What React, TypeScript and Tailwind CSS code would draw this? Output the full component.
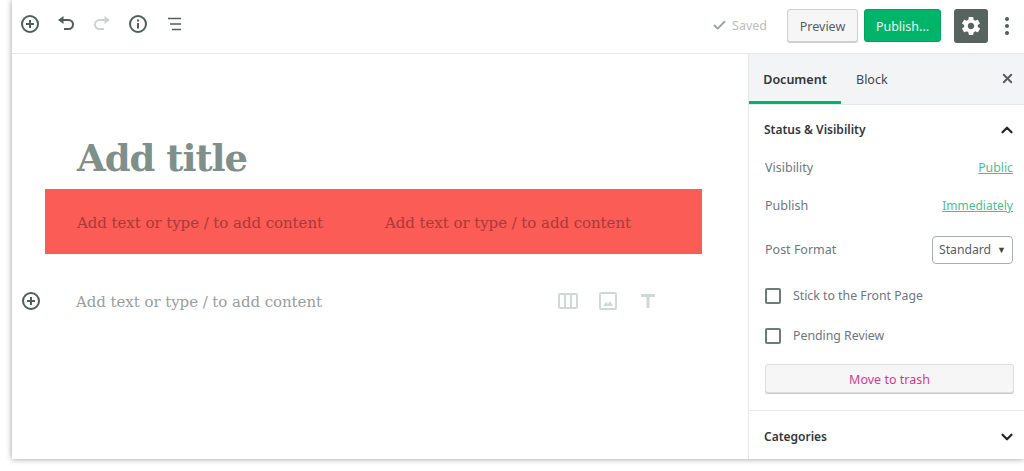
import React from "react";
import { FiCheck, FiChevronDown, FiChevronUp, FiX } from "react-icons/fi";
import { IoMdSettings } from "react-icons/io";

const serif = "font-['DejaVu_Serif',serif]";

const PlusCircle = ({ size = 20 }: { size?: number }) => (
  <svg width={size} height={size} viewBox="0 0 20 20" fill="none" stroke="#4f5f5b" strokeWidth="2">
    <circle cx="10" cy="10" r="8" />
    <path d="M10 6v8M6 10h8" />
  </svg>
);

const Undo = ({ color }: { color: string }) => (
  <svg width="20" height="20" viewBox="0 0 20 20" fill="none" stroke={color} strokeWidth="2">
    <path d="M5 6h7.500a4.500 4.500 0 0 1 0 9H8" />
    <path d="M7.500 2 2 6l5.500 4z" fill={color} stroke="none" />
  </svg>
);

const TopBar = () => {
  return (
    <div className="h-[54px] shrink-0 flex items-center justify-between border-b border-[#e6e9e9] pl-[8px] pr-[8px] pb-[2px]">
      <div className="flex items-center gap-[16px] pb-[4px]">
        <PlusCircle />
        <div className="-ml-[0.500px]">
          <Undo color="#4f5f5b" />
        </div>
        <div className="-scale-x-100">
          <Undo color="#ccd4d2" />
        </div>
        <svg className="ml-[0.500px]" width="20" height="20" viewBox="0 0 20 20" fill="none" stroke="#4f5f5b" strokeWidth="2">
          <circle cx="10" cy="10" r="8" />
          <path d="M10 9v5.500M10 5.500v2" />
        </svg>
        <svg width="20" height="20" viewBox="0 0 20 20" fill="none" stroke="#4f5f5b" strokeWidth="1.500">
          <path d="M4 4.500h3M6 4.500h11M6 10h11M8 15.500h9" />
        </svg>
      </div>
      <div className="flex items-center font-['Noto_Sans',sans-serif] text-[12.500px]">
        <FiCheck className="text-[#9aa5a3] text-[15px] mr-[5px] ml-[1px]" strokeWidth={3} />
        <span className="text-[#b8c0be] mr-[20px] pt-[2px]">Saved</span>
        <button className="w-[71px] h-[33px] pt-[4px] mr-[6px] rounded-[3px] border border-[#ccd0d0] bg-[#f6f6f6] text-[#555d66] shadow-[0_1px_0_#ccd0d0]">
          Preview
        </button>
        <button className="w-[77px] h-[33px] pt-[3px] mr-[13px] rounded-[3px] bg-[#00b56a] border border-[#00a45f] text-[#e6f7ef]">
          Publish...
        </button>
        <div className="w-[34px] h-[34px] mr-[17px] rounded-[3px] bg-[#56635f] flex items-center justify-center">
          <IoMdSettings className="text-white text-[22px]" />
        </div>
        <div className="flex flex-col gap-[3px] w-[4px] mr-[7px]">
          <span className="w-[4px] h-[4px] rounded-full bg-[#4f5f5b]"></span>
          <span className="w-[4px] h-[4px] rounded-full bg-[#4f5f5b]"></span>
          <span className="w-[4px] h-[4px] rounded-full bg-[#4f5f5b]"></span>
        </div>
      </div>
    </div>
  );
};

const Editor = () => {
  const placeholder = "Add text or type / to add content";
  return (
    <div className={`flex-1 flex flex-col ${serif}`}>
      <h1 className="h-[135px] pl-[65px] pt-[80px] text-[37px] leading-[48px] font-bold text-[#7f908b] tracking-[-1px]">
        Add title
      </h1>
      <div className="ml-[33px] mr-[46px] h-[65px] bg-[#fb5c56] flex items-center pl-[32px] pt-[3px] text-[15px] text-[#a83a37] tracking-[-0.06px]">
        <p className="w-[308px]">{placeholder}</p>
        <p>{placeholder}</p>
      </div>
      <div className="mt-[33px] h-[28px] flex items-center pl-[9px]">
        <PlusCircle />
        <p className="ml-[35px] pt-[2px] text-[15px] text-[#98a09e] tracking-[-0.06px]">{placeholder}</p>
        <div className="ml-[236px] flex items-center gap-[20px]">
          <svg width="20" height="20" viewBox="0 0 20 20" fill="none" stroke="#cfdad6" strokeWidth="2">
            <rect x="1" y="3" width="18" height="14" rx="1" />
            <path d="M7 3v14M13 3v14" />
          </svg>
          <svg width="20" height="20" viewBox="0 0 20 20" fill="none" stroke="#cfdad6" strokeWidth="2">
            <rect x="2" y="2" width="16" height="16" rx="1" />
            <path d="M5 15l3-4 2 2 2-3 3 5z" fill="#cfdad6" stroke="none" />
          </svg>
          <svg width="20" height="20" viewBox="0 0 20 20" fill="none" stroke="#cfdad6" strokeWidth="3">
            <path d="M3 4.500h14M10 4.500V17" />
          </svg>
        </div>
      </div>
    </div>
  );
};

const Field = ({ label, children, className }: { label: string; children: React.ReactNode; className: string }) => (
  <div className={`flex items-center justify-between ${className}`}>
    <span className="text-[#6c7781]">{label}</span>
    {children}
  </div>
);

const Check = ({ label, className }: { label: string; className: string }) => (
  <div className={`flex items-center ${className}`}>
    <span className="w-[16px] h-[16px] rounded-[2px] border-2 border-[#6c7d79] mr-[12px]"></span>
    <span className="text-[#6c7781] text-[12.300px]">{label}</span>
  </div>
);

const Sidebar = () => {
  return (
    <div className="w-[276px] shrink-0 border-l border-[#e6e9e9] flex flex-col font-['Noto_Sans',sans-serif] text-[12.500px]">
      <div className="h-[51px] shrink-0 bg-[#f3f4f5] border-b border-[#e6e9e9] flex items-stretch relative">
        <div className="w-[92px] border-b-[3px] border-[#00b56a] flex items-center justify-center font-semibold text-[#32373c] pt-[5px]">
          Document
        </div>
        <div className="ml-[15px] flex items-center text-[#40464d] pt-[2px]">Block</div>
        <FiX className="absolute right-[9px] top-[17px] text-[#555d66] text-[15px]" strokeWidth={3} />
      </div>
      <div className="flex-1 flex flex-col">
        <div className="h-[306px] border-b border-[#e6e9e9] pl-[16px] pr-[10px]">
          <div className="h-[50px] -ml-[1px] flex items-center justify-between font-semibold text-[#32373c] text-[12px]">
            Status &amp; Visibility
            <FiChevronUp className="text-[#23282d] text-[18px] mr-[-2px]" strokeWidth={3} />
          </div>
          <Field label="Visibility" className="h-[24px] mt-[1px]">
            <a className="text-[#4cbf91] underline text-[12.300px] mr-[1px]">Public</a>
          </Field>
          <Field label="Publish" className="h-[24px] mt-[14px]">
            <a className="text-[#4cbf91] underline text-[12px] mr-[1px]">Immediately</a>
          </Field>
          <Field label="Post Format" className="h-[28px] mt-[18px]">
            <div className="w-[81px] h-[28px] mr-[1px] border border-[#a4b0ac] rounded-[4px] flex items-center justify-between pl-[6px] pr-[6px] text-[#555d66] text-[12.200px]">
              Standard
              <span className="text-[9px] text-[#40464d]">▼</span>
            </div>
          </Field>
          <Check label="Stick to the Front Page" className="h-[20px] mt-[22px]" />
          <Check label="Pending Review" className="h-[20px] mt-[20px]" />
          <button className="w-full h-[29px] mt-[18px] pt-[3px] rounded-[3px] border border-[#dcdfdf] bg-[#f6f6f6] shadow-[0_1px_0_#c6caca] text-[#d63a8e]">
            Move to trash
          </button>
        </div>
        <div className="flex-1 flex items-center justify-between pl-[15px] pr-[8px] pt-[3px] font-semibold text-[#32373c] text-[12px]">
          Categories
          <FiChevronDown className="text-[#23282d] text-[18px]" strokeWidth={3} />
        </div>
      </div>
    </div>
  );
};

export default function App() {
  return (
    <div className="w-[1024px] h-[471px] bg-white pl-[12px] pb-[12px] overflow-hidden">
      <div className="h-[459px] flex flex-col bg-white shadow-[0_0_6px_rgba(0,0,0,0.4)]">
        <TopBar />
        <div className="flex-1 flex">
          <Editor />
          <Sidebar />
        </div>
      </div>
    </div>
  );
}
